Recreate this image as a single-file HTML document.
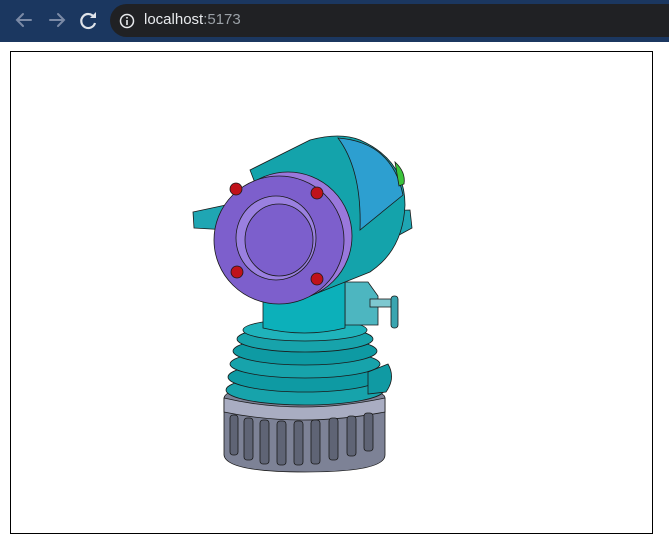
<!DOCTYPE html>
<html><head><style>
html,body{margin:0;padding:0;width:669px;height:547px;overflow:hidden;background:#fff;font-family:"Liberation Sans",sans-serif}
.bar{position:absolute;left:0;top:0;width:669px;height:42px;background:#1b3760}
.pill{position:absolute;left:110px;top:4px;width:580px;height:33px;border-radius:17px;background:#202124}
.url{position:absolute;left:144px;top:11px;font-size:15px;color:#e8eaed}
.url span{color:#9aa0a6}
.frame{position:absolute;left:10px;top:51px;width:641px;height:481px;border:1px solid #000}
</style></head><body>
<div class="bar"></div>
<svg style="position:absolute;left:0;top:0" width="110" height="42">
<g stroke="#7b8aa6" stroke-width="2" fill="none" stroke-linecap="round">
<path d="M31 20H17M23 14l-6 6 6 6"/>
<path d="M50 20h14M58 14l6 6-6 6"/>
</g>
<path d="M94 17a7 7 0 1 0 1 6" stroke="#dfe3ea" stroke-width="2.2" fill="none"/>
<path d="M96 12v6h-6z" fill="#dfe3ea"/>
</svg>
<div class="pill"></div>
<svg style="position:absolute;left:118px;top:12px" width="18" height="18"><circle cx="9" cy="9" r="6.5" stroke="#e8eaed" stroke-width="1.5" fill="none"/><rect x="8.2" y="8" width="1.6" height="5" fill="#e8eaed"/><rect x="8.2" y="5" width="1.6" height="1.6" fill="#e8eaed"/></svg>
<div class="url">localhost<span>:5173</span></div>
<div class="frame"></div>
<svg style="position:absolute;left:0;top:0" width="669" height="547">
<g stroke="#1a1a1a" stroke-width="0.8">
<!-- bottom gray -->
<path d="M224 398 Q226 385 300 386 Q385 386 385 398 V455 Q385 472 305 472 Q226 472 224 455Z" fill="#7d8296"/>
<path d="M224 398 Q300 416 385 398 V412 Q300 428 224 412Z" fill="#a9adc2"/>
<g fill="#5f6475">
<rect x="230" y="415" width="8" height="40" rx="3"/><rect x="244" y="418" width="9" height="42" rx="3"/><rect x="260" y="420" width="9" height="44" rx="3"/><rect x="277" y="421" width="9" height="44" rx="3"/><rect x="294" y="421" width="9" height="44" rx="3"/><rect x="311" y="420" width="9" height="44" rx="3"/><rect x="329" y="418" width="9" height="42" rx="3"/><rect x="347" y="416" width="9" height="40" rx="3"/><rect x="364" y="413" width="9" height="38" rx="3"/>
</g>
<!-- fins -->
<ellipse cx="305" cy="390" rx="79" ry="15" fill="#17a3ab"/>
<ellipse cx="305" cy="377" rx="77" ry="15" fill="#0e9aa3"/>
<ellipse cx="305" cy="364" rx="75" ry="14" fill="#17a3ab"/>
<ellipse cx="305" cy="351" rx="72" ry="14" fill="#0e9aa3"/>
<ellipse cx="305" cy="339" rx="68" ry="13" fill="#17a3ab"/>
<ellipse cx="305" cy="330" rx="62" ry="11" fill="#1fb3bb"/>
<path d="M368 372 L388 364 Q396 378 386 392 L368 394Z" fill="#109aa3"/>
<!-- side valve -->
<path d="M345 282 H368 L378 296 V325 H345Z" fill="#4db6c0"/>
<rect x="370" y="299" width="26" height="8" fill="#7ec8d0"/>
<rect x="391" y="296" width="7" height="32" rx="3" fill="#3aa5b0"/>
<!-- neck -->
<path d="M263 282 H345 V328 Q305 338 263 328Z" fill="#0cb0ba"/>
<!-- flanges -->
<path d="M193 212 L226 205 L228 230 L194 228Z" fill="#1fa6b3"/>
<path d="M345 212 L410 210 L412 228 L390 240 L345 240Z" fill="#1fa6b3"/>
<!-- back cylinder -->
<path d="M250 170 L310 140 Q340 132 360 140 Q405 160 405 205 Q403 250 370 272 L300 300 Z" fill="#14a3ab"/>
<path d="M338 138 Q392 142 403 195 L360 230 Q362 170 338 138Z" fill="#2d9fd0"/>
<path d="M395 162 Q406 172 404 184 L399 186Z" fill="#3cc43c"/>
<!-- front face -->
<ellipse cx="288" cy="236" rx="64" ry="64" fill="#9a78dc"/>
<ellipse cx="279" cy="240" rx="65" ry="64" fill="#7d5fcc"/>
<ellipse cx="276" cy="238" rx="40" ry="42" fill="#9a80e0"/>
<ellipse cx="279" cy="240" rx="34" ry="36" fill="#7c5fcc"/>
<g fill="#c0121a">
<circle cx="236" cy="189" r="6"/><circle cx="317" cy="193" r="6"/><circle cx="237" cy="272" r="6"/><circle cx="317" cy="279" r="6"/>
</g>
</g>
</svg>
</body></html>
